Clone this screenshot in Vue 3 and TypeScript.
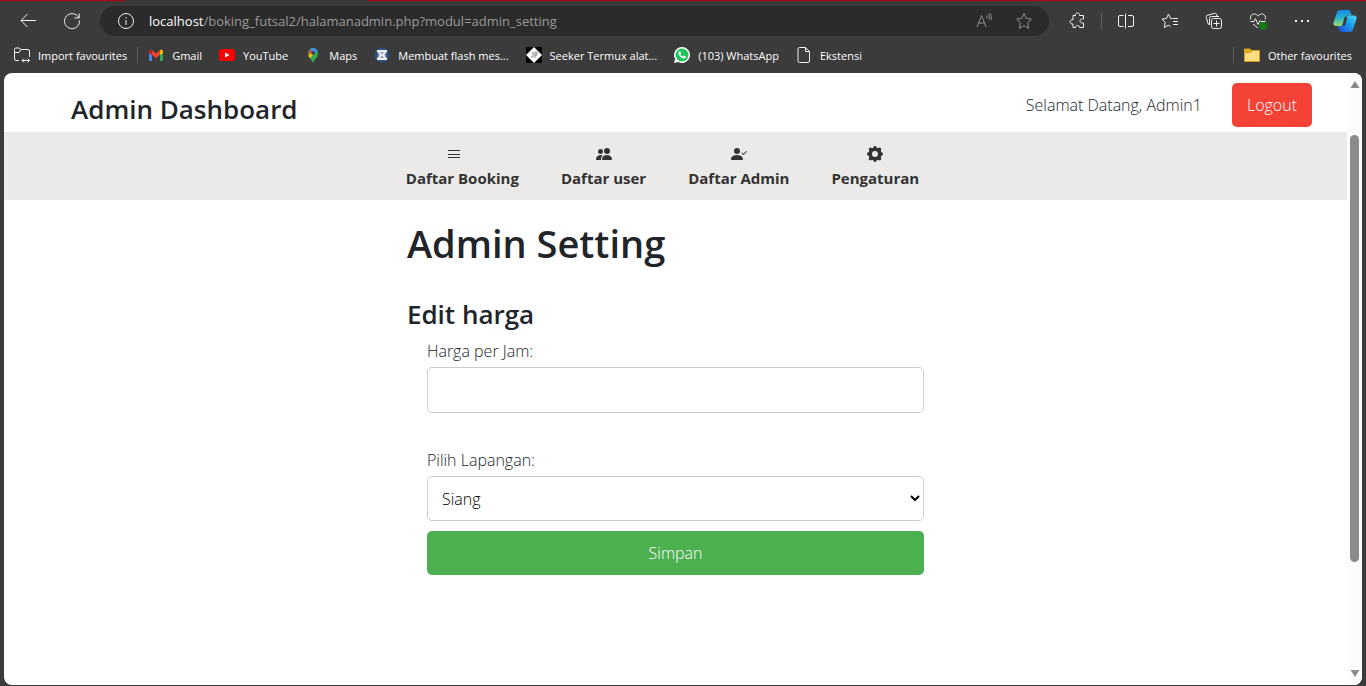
<script setup lang="ts">
import { ref } from 'vue'

interface Bookmark {
  icon: string
  label: string
}

const bookmarks: Bookmark[] = [
  { icon: 'gmail', label: 'Gmail' },
  { icon: 'youtube', label: 'YouTube' },
  { icon: 'maps', label: 'Maps' },
  { icon: 'flash', label: 'Membuat flash mes...' },
  { icon: 'seeker', label: 'Seeker Termux alat...' },
  { icon: 'whatsapp', label: '(103) WhatsApp' },
  { icon: 'file', label: 'Ekstensi' },
]

const menu: Bookmark[] = [
  { icon: 'list', label: 'Daftar Booking' },
  { icon: 'users', label: 'Daftar user' },
  { icon: 'check', label: 'Daftar Admin' },
  { icon: 'gear', label: 'Pengaturan' },
]

const price = ref('')
const field = ref('Siang')
</script>

<template>
  <div class="browser">
    <div class="tabline"><span class="red first"></span><span class="tab"></span><span class="red rest"></span></div>
    <div class="toolbar">
      <button class="tool" aria-label="Back">
        <svg width="18" height="18" viewBox="0 0 18 18"><path d="M17 8.500H2M8.500 2L2 8.500l6.500 6.500" /></svg>
      </button>
      <button class="tool" aria-label="Refresh">
        <svg width="18" height="18" viewBox="0 0 18 18"><path d="M16.500 8.500A7.500 7.500 0 1 1 14.500 4L16 5.500M16.200 1.500v4.500h-4.700" /></svg>
      </button>
      <div class="address">
        <svg class="info" width="18" height="18" viewBox="0 0 18 18"><circle cx="9" cy="9" r="7.500" /><path d="M9 8v5M9 5v1.500" /></svg>
        <span class="url"><span class="host">localhost</span>/boking_futsal2/halamanadmin.php?modul=admin_setting</span>
        <button class="small dim" aria-label="Read aloud">
          <svg width="18" height="18" viewBox="0 0 18 18"><path d="M2 15L6.500 3.500 11 15M3.500 11h6M11 3.500c1 .7 1.200 2 .8 3.200M12.800 2c1.600 1.400 2 3.600 1.200 5.600M14.500 1c2 2 2.400 4.600 1.400 7.200" /></svg>
        </button>
        <button class="small dim" aria-label="Add to favourites">
          <svg width="18" height="18" viewBox="0 0 18 18"><path d="M9 1.500l2.300 4.900 5.200.7-3.800 3.700.9 5.500L9 13.700l-4.600 2.600.9-5.500L1.500 7.100l5.200-.7z" /></svg>
        </button>
      </div>
      <button class="tool" aria-label="Extensions">
        <svg width="18" height="18" viewBox="0 0 18 18"><path d="M5 3.500h2.500C7.300 1.800 8.200 1 9.500 1s2.200.8 2 2.500h4V7h-1c-1.500 0-2.500.8-2.500 2s1 2 2.500 2h1v4.500h-4c.1-1.300-.7-2-2-2s-2.100.7-2 2H5V12C3.200 12.200 2 11 2 9.800S3.300 7.500 5 7.700z" /></svg>
      </button>
      <span class="split"></span>
      <button class="tool" aria-label="Split screen">
        <svg width="18" height="18" viewBox="0 0 18 18"><path d="M6.500 3.500H3a1.500 1.500 0 0 0-1.500 1.500v8A1.500 1.500 0 0 0 3 14.500h3.500M8.500 1.500v15M11 3.500h4A1.500 1.500 0 0 1 16.500 5v8a1.500 1.500 0 0 1-1.500 1.500h-4" /></svg>
      </button>
      <button class="tool" aria-label="Favourites">
        <svg width="18" height="18" viewBox="0 0 18 18"><path d="M11.500 6.500H17M12 9.500h5M12 12.500h5M11 6.500H9.600L7.500 2 5.400 6.500l-4.400.6 3.200 3.200-.8 5.200 4.100-2.300 2 1.200" /></svg>
      </button>
      <button class="tool" aria-label="Collections">
        <svg width="18" height="18" viewBox="0 0 18 18"><rect x="6.500" y="6.500" width="10" height="10" rx="2" /><path d="M11.500 8.500v6M8.500 11.500h6M4.500 12.500L3 11.800 1.200 5.200c-.2-.8 0-1.500 1-1.800L9.800 1.300c.8-.2 1.500.1 1.800 1l.5 2M4.500 13V6.500a2 2 0 0 1 2-2h7.500" /></svg>
      </button>
      <button class="tool" aria-label="Browser essentials">
        <svg width="18" height="18" viewBox="0 0 18 18"><path d="M2 7.500C.5 4 3 1.800 5.500 2 7.500 2 8.500 3.500 9 4.200 9.500 3.500 10.500 2 12.500 2c2.500-.2 5 2 3.500 5.500M1.500 9.500H5l1.500-3 2.500 6 2-4 1 1h4.500M4 12l5 4" /><circle class="badge" cx="14" cy="14" r="4" /></svg>
      </button>
      <button class="tool" aria-label="Settings and more">
        <svg width="18" height="18" viewBox="0 0 18 18"><g class="dots"><rect x="2" y="8" width="2" height="2" /><rect x="8" y="8" width="2" height="2" /><rect x="14" y="8" width="2" height="2" /></g></svg>
      </button>
      <button class="tool copilot" aria-label="Copilot">
        <svg width="24" height="24" viewBox="0 0 24 24">
          <defs>
            <linearGradient id="copA" x1="0" y1="0" x2="0" y2="1"><stop offset="0" stop-color="#1689e8" /><stop offset=".5" stop-color="#28b5c9" /><stop offset="1" stop-color="#9adb6a" /></linearGradient>
            <linearGradient id="copB" x1="0" y1="1" x2="1" y2="0"><stop offset="0" stop-color="#1846d8" /><stop offset=".6" stop-color="#1aa8f0" /><stop offset="1" stop-color="#55d5f4" /></linearGradient>
          </defs>
          <path fill="url(#copA)" d="M7 1h8c2 0 2.600 1.500 3 3l.7 2.500h-4c-1.800 0-2.500 1-3 2.500l-2 6c-.5 1.500-1.200 2-2.700 2H3c-2.200 0-3-1.500-2.500-3.500L4 3.500C4.500 2 5.300 1 7 1z" />
          <path fill="url(#copB)" d="M17 23H9c-2 0-2.600-1.500-3-3l-.7-3H8c1.500 0 2.200-.5 2.700-2l2-6c.5-1.500 1.500-2.500 3-2.500H21c2.200 0 3 1.500 2.500 3.500L20 20.500c-.5 1.500-1.300 2.500-3 2.500z" />
          <path fill="#3b3b3b" d="M11.500 8.500h3l-2.500 8H9.500z" />
        </svg>
      </button>
    </div>

    <nav class="bookmarks" aria-label="Favourites bar">
      <button class="bookmark import">
        <svg width="18" height="18" viewBox="0 0 18 18"><path d="M6 14.500H3A1.500 1.500 0 0 1 1.500 13V3.500A1.500 1.500 0 0 1 3 2h3l2 1.500h7A1.500 1.500 0 0 1 16.500 5v6M1.500 6.500H6l2-3M9 14.500h7.500M11 12.500l-2 2 2 2M14.500 12.500l2 2-2 2" /></svg>
        <span>Import favourites</span>
      </button>
      <span class="rule"></span>
      <a v-for="b in bookmarks" :key="b.label" class="bookmark" href="#">
        <svg v-if="b.icon === 'gmail'" class="plain" width="16" height="16" viewBox="0 0 16 16"><path fill="#4285f4" d="M1 5l3 2v7H2a1 1 0 0 1-1-1z" /><path fill="#34a853" d="M12 7l3-2v8a1 1 0 0 1-1 1h-2z" /><path fill="#c5221f" d="M1 6V4.500C1 3 2.500 2.300 4 3.300V8z" /><path fill="#fbbc04" d="M12 3.300c1.500-1 3-.3 3 1.200V6l-3 2z" /><path fill="#ea4335" d="M4 3.300l4 3 4-3V8l-4 3-4-3z" /></svg>
        <svg v-else-if="b.icon === 'youtube'" class="plain" width="16" height="16" viewBox="0 0 16 16"><rect y="2" width="16" height="12" rx="3" fill="#f00" /><path fill="#fff" d="M6 5.500v5L10.500 8z" /></svg>
        <svg v-else-if="b.icon === 'maps'" class="plain" width="16" height="16" viewBox="0 0 16 16"><path fill="#34a853" d="M8 16c-.6-3-5-5-5-10a5 5 0 0 1 10 0c0 5-4.400 7-5 10z" /><path fill="#4285f4" d="M5 2a5 5 0 0 1 7.500 2L8 8z" /><path fill="#ea4335" d="M5 2L3.500 8 8 6z" /><path fill="#fbbc04" d="M3.400 8.200L8 4v4l-3 3.500z" /><circle cx="8" cy="6" r="1.800" fill="#3b3b3b" /></svg>
        <svg v-else-if="b.icon === 'flash'" class="plain" width="16" height="16" viewBox="0 0 16 16"><circle cx="8" cy="8" r="7.500" fill="#2c5283" /><path fill="#f2f2f2" d="M3 3h10v2.500h-1.500V10.500H13V13H3v-2.500h1.500V5.500H3z" /><path fill="#8b98aa" d="M6 5h4L8 7.500zM6 11l2-2.500 2 2.500zM4.500 6.500L6 8 4.500 9.500zM11.500 6.500L10 8l1.500 1.500z" /></svg>
        <svg v-else-if="b.icon === 'seeker'" class="plain" width="16" height="16" viewBox="0 0 16 16"><path fill="#000" d="M0 0h16v16H0z" /><path fill="#fff" d="M8 0l8 8-8 8-8-8z" /><path class="mark" d="M7 5v5H5M9 11V5h2v3H9" /></svg>
        <svg v-else-if="b.icon === 'whatsapp'" class="plain" width="16" height="16" viewBox="0 0 16 16"><path fill="#fff" d="M8 0a8 8 0 1 1-3.700 15.100L0 16l1.100-4A8 8 0 0 1 8 0z" /><circle cx="8" cy="8" r="6.500" fill="#20c659" /><path fill="#fff" d="M5 4.500l1.200-.3.900 2-.7 1c.6 1.200 1.300 1.800 2.500 2.400l1-1 1.900 1c0 1.600-1.200 2-2.300 1.900C7 11 4.700 8.500 4.400 6.200 4.400 5.500 4.600 5 5 4.500z" /></svg>
        <svg v-else width="16" height="16" viewBox="0 0 16 16"><path d="M3.500.5h6l4 4V14a1.500 1.500 0 0 1-1.500 1.500H3.500A1.500 1.500 0 0 1 2 14V2A1.500 1.500 0 0 1 3.500.5zM9.500.5v4h4" /></svg>
        <span>{{ b.label }}</span>
      </a>
      <span class="rule push"></span>
      <button class="bookmark other">
        <svg class="plain" width="16" height="16" viewBox="0 0 16 16"><path fill="#e2a91c" d="M0 2.500A1 1 0 0 1 1 1.500h5l2 2-2 2H0z" /><path class="flap" d="M.5 5.500H6l2-2h7.500v11H.5z" /></svg>
        <span>Other favourites</span>
      </button>
    </nav>

    <div class="viewport">
      <div class="page">
        <header class="header">
          <h2 class="brand">Admin Dashboard</h2>
          <span class="welcome">Selamat Datang, Admin1</span>
          <button class="logout">Logout</button>
        </header>

        <nav class="menu" aria-label="Admin">
          <a v-for="m in menu" :key="m.label" class="entry" href="#">
            <svg v-if="m.icon === 'list'" width="32" height="16" viewBox="0 0 32 16"><path d="M2 4h12v1H2zM2 8h12v1H2zM2 11h12v1H2z" /></svg>
            <svg v-else-if="m.icon === 'users'" width="16" height="16" viewBox="0 0 16 16"><path d="M7 14s-1 0-1-1 1-4 5-4 5 3 5 4-1 1-1 1zm4-6a3 3 0 1 0 0-6 3 3 0 0 0 0 6m-5.784 6A2.240 2.240 0 0 1 5 13c0-1.355.68-2.750 1.936-3.720A6.300 6.300 0 0 0 5 9c-4 0-5 3-5 4s1 1 1 1zM4.500 8a2.500 2.500 0 1 0 0-5 2.500 2.500 0 0 0 0 5" /></svg>
            <svg v-else-if="m.icon === 'check'" width="16" height="16" viewBox="0 0 16 16"><path fill-rule="evenodd" d="M15.854 5.146a.5.500 0 0 1 0 .708l-3 3a.5.500 0 0 1-.708 0l-1.500-1.500a.5.500 0 0 1 .708-.708L12.500 7.793l2.646-2.647a.5.500 0 0 1 .708 0" /><path d="M1 14s-1 0-1-1 1-4 6-4 6 3 6 4-1 1-1 1zm5-6a3 3 0 1 0 0-6 3 3 0 0 0 0 6" /></svg>
            <svg v-else width="16" height="16" viewBox="0 0 16 16"><path fill-rule="evenodd" d="M6.600.8c.4-1 2.400-1 2.800 0l.3.900 1.300.5.900-.5c1.300-.6 2.900.9 2.200 2.200l-.4.900.5 1.300.9.300c1.100.4 1.100 2.800 0 3.200l-.9.300-.5 1.300.4.900c.7 1.300-.9 2.800-2.200 2.200l-.9-.5-1.300.5-.3.900c-.4 1-2.400 1-2.800 0l-.3-.9-1.300-.5-.9.500c-1.300.6-2.900-.9-2.200-2.200l.4-.9-.5-1.300-.9-.3c-1.100-.4-1.100-2.800 0-3.200l.9-.3.5-1.300-.4-.9c-.7-1.300.9-2.800 2.200-2.200l.9.500 1.300-.5zM8 5a3 3 0 1 0 0 6 3 3 0 0 0 0-6" /></svg>
            <span>{{ m.label }}</span>
          </a>
        </nav>

        <main class="content">
          <h1 class="title">Admin Setting</h1>
          <h2 class="subtitle">Edit harga</h2>
          <form class="form" @submit.prevent>
            <label for="price">Harga per Jam:</label>
            <input id="price" v-model="price" type="text" />
            <label for="field">Pilih Lapangan:</label>
            <select id="field" v-model="field">
              <option>Siang</option>
              <option>Malam</option>
            </select>
            <button class="save" type="submit">Simpan</button>
          </form>
        </main>
      </div>
      <div class="scrollbar">
        <svg width="10" height="8" viewBox="0 0 10 8"><path d="M5 0l4.500 7h-9z" /></svg>
        <div class="track"><div class="thumb"></div></div>
        <svg width="10" height="8" viewBox="0 0 10 8"><path d="M5 8l4.500-7h-9z" /></svg>
      </div>
    </div>
  </div>
</template>

<style>
body {
  background: #3b3b3b;
}
</style>

<style scoped>
* {
  box-sizing: border-box;
}
.browser {
  display: flex;
  flex-direction: column;
  height: 100vh;
  background: #3b3b3b;
  color: #fff;
  font-family: "Open Sans", "Noto Sans", sans-serif;
  font-size: 16px;
  font-weight: 300;
}
button {
  padding: 0;
  border: 0;
  background: none;
  color: inherit;
  font: inherit;
}
svg {
  flex: none;
}
.tabline {
  display: flex;
  flex: none;
  height: 1px;
}
.red {
  background: #b90510;
}
.first {
  width: 125px;
}
.tab {
  width: 243px;
}
.rest {
  flex: 1;
}
.toolbar {
  display: flex;
  align-items: center;
  height: 39px;
  padding-left: 6px;
}
.tool,
.small {
  display: flex;
  align-items: center;
  justify-content: center;
  width: 44px;
  height: 30px;
}
.small {
  width: 40px;
}
.toolbar svg,
.bookmark svg {
  fill: none;
  stroke: #f0f0f0;
  stroke-width: 1;
}
.toolbar .dim svg {
  stroke: #8f8f8f;
}
.toolbar .dots {
  fill: #f0f0f0;
  stroke: none;
}
.toolbar .badge {
  fill: #107c10;
  stroke: none;
}
.toolbar .copilot svg,
.bookmark .plain {
  stroke: none;
}
.mark {
  fill: none;
  stroke: #888;
}
.flap {
  fill: #ffdf83;
  stroke: #d59d20;
}
.tool.copilot {
  width: 42px;
}
.address {
  display: flex;
  flex: 1;
  align-items: center;
  height: 30px;
  margin: 0 6px;
  padding: 0 5px 0 17px;
  border-radius: 15px;
  background: #2b2b2b;
}
.url {
  flex: 1;
  margin-left: 14px;
  color: #9a9a9a;
  font-size: 13px;
  font-weight: 400;
  white-space: nowrap;
}
.host {
  color: #fff;
}
.split {
  width: 1px;
  height: 16px;
  margin: 0 2px;
  background: #606060;
}
.bookmarks {
  display: flex;
  align-items: center;
  gap: 17px;
  height: 30px;
  padding: 0 14px 0 13px;
  font-size: 11px;
  font-weight: 400;
}
.bookmark {
  display: flex;
  align-items: center;
  gap: 8px;
  color: #fff;
  text-decoration: none;
  white-space: nowrap;
}
.import {
  gap: 7px;
}
.rule {
  width: 1px;
  height: 16px;
  margin: 0 -7px;
  background: #5c5c5c;
}
.push {
  margin-left: auto;
}
.viewport {
  display: flex;
  flex: 1;
  margin: 3px 4px 1px;
  overflow: hidden;
  border-radius: 8px;
  background: #fff;
  color: #212529;
}
.page {
  flex: 1;
}
.header {
  display: flex;
  align-items: center;
  height: 59px;
  padding: 10px 35px 5px 67px;
}
.brand {
  flex: 1;
  align-self: flex-end;
  margin: 0;
  font-size: 26px;
  font-weight: 600;
  line-height: 36px;
}
.welcome {
  margin-right: 30px;
}
.logout {
  height: 44px;
  padding: 0 15px;
  border-radius: 5px;
  background: #f44336;
  color: #fff;
}
.menu {
  display: flex;
  justify-content: center;
  gap: 42px;
  height: 68px;
  padding: 14px 26px 0 0;
  background: #ebeae8;
}
.entry {
  display: flex;
  flex-direction: column;
  align-items: center;
  color: #333;
  font-size: 15px;
  font-weight: 700;
  line-height: 24px;
  text-decoration: none;
}
.entry svg {
  margin-bottom: 4px;
  fill: #333;
}
.content {
  width: 40%;
  margin: 0 auto;
}
.title {
  margin: 19px 0 30px;
  font-size: 38px;
  font-weight: 600;
  line-height: 48px;
}
.subtitle {
  margin: 0 0 8px;
  font-size: 26px;
  font-weight: 600;
  line-height: 34px;
}
.form {
  display: flex;
  flex-direction: column;
  padding: 0 20px;
}
label {
  margin-bottom: 4px;
  line-height: 24px;
}
input,
select {
  height: 46px;
  padding: 10px;
  border: 1px solid #ccc;
  border-radius: 5px;
  background: #fff;
  color: #000;
  font: inherit;
}
input {
  margin-bottom: 35px;
}
select {
  height: 45px;
  margin-bottom: 10px;
}
.save {
  height: 44px;
  border-radius: 5px;
  background: #4caf50;
  color: #fff;
}
.scrollbar {
  display: flex;
  flex-direction: column;
  align-items: center;
  width: 15px;
  padding: 8px 0;
  background: #fcfcfc;
}
.scrollbar svg {
  fill: #8b8b8b;
}
.track {
  flex: 1;
  padding: 46px 0 0;
}
.thumb {
  width: 9px;
  height: 80%;
  border-radius: 5px;
  background: #8b8b8b;
}
</style>
